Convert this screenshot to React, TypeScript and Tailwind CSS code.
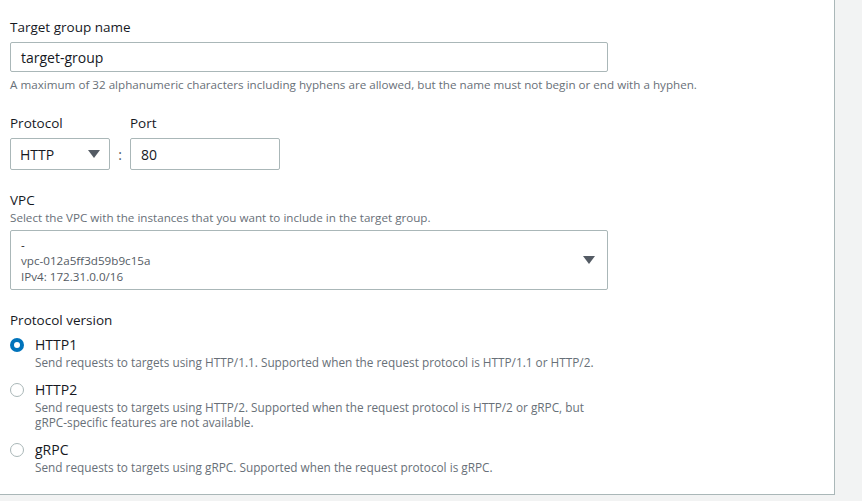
import React from "react";

const font = { fontFamily: '"Open Sans", "Noto Sans", sans-serif' };

function Caret() {
  return (
    <svg width="12" height="8" viewBox="0 0 12 8" className="shrink-0">
      <path d="M0 0 H12 L6 8 Z" fill="#545b64" />
    </svg>
  );
}

function Radio({ checked }: { checked?: boolean }) {
  return checked ? (
    <span className="mt-[3px] flex h-[14px] w-[14px] shrink-0 items-center justify-center rounded-full bg-[#0073bb]">
      <span className="h-[6px] w-[6px] rounded-full bg-white" />
    </span>
  ) : (
    <span className="mt-[3px] h-[14px] w-[14px] shrink-0 rounded-full border border-[#aab7b8] bg-white" />
  );
}

function Option({ checked, title, desc }: { checked?: boolean; title: string; desc: React.ReactNode }) {
  return (
    <div className="flex gap-[11px] pl-[10px]">
      <Radio checked={checked} />
      <div>
        <div className="text-[14px] leading-[20px] text-[#16191f]">{title}</div>
        <div className="text-[11.8px] leading-[15px] text-[#687078]">{desc}</div>
      </div>
    </div>
  );
}

export default function App() {
  return (
    <div className="h-[501px] w-[862px] overflow-hidden bg-[#f2f3f3]" style={font}>
      <div className="h-[495px] w-[835px] border-b border-r border-[#aab7b8] bg-white pl-[10px] pt-[17px]">
        <div className="text-[13.5px] leading-[20px] text-[#16191f]">Target group name</div>
        <div className="mt-[5px] flex h-[30px] w-[598px] items-center rounded-[2px] border border-[#aab7b8] px-[10px] text-[14px] text-[#16191f]">
          target-group
        </div>
        <div className="mt-[5px] text-[11.65px] leading-[16px] text-[#687078]">
          A maximum of 32 alphanumeric characters including hyphens are allowed, but the name must not begin or end with a hyphen.
        </div>

        <div className="mt-[20px] flex">
          <div className="w-[120px]">
            <div className="text-[13.5px] leading-[20px] text-[#16191f]">Protocol</div>
          </div>
          <div className="text-[13.5px] leading-[20px] text-[#16191f]">Port</div>
        </div>
        <div className="mt-[5px] flex items-center">
          <div className="flex h-[32px] w-[100px] items-center justify-between rounded-[2px] border border-[#aab7b8] pl-[9px] pr-[9px] text-[14px] text-[#16191f]">
            HTTP
            <Caret />
          </div>
          <div className="w-[20px] text-center text-[14px] text-[#545b64]">:</div>
          <div className="flex h-[32px] w-[150px] items-center rounded-[2px] border border-[#aab7b8] px-[10px] text-[14px] text-[#16191f]">
            80
          </div>
        </div>

        <div className="mt-[20px] text-[13.5px] leading-[20px] text-[#16191f]">VPC</div>
        <div className="text-[11.65px] leading-[16px] text-[#687078]">
          Select the VPC with the instances that you want to include in the target group.
        </div>
        <div className="mt-[4px] flex h-[60px] w-[598px] items-center justify-between rounded-[2px] border border-[#aab7b8] pl-[10px] pr-[12px]">
          <div className="pt-[2px] text-[11.65px] leading-[16px] text-[#545b64]">
            <div className="text-[#16191f]">-</div>
            <div>vpc-012a5ff3d59b9c15a</div>
            <div>IPv4: 172.31.0.0/16</div>
          </div>
          <Caret />
        </div>

        <div className="mt-[20px] text-[13.5px] leading-[20px] text-[#16191f]">Protocol version</div>
        <div className="-ml-[10px] mt-[5px] flex flex-col gap-[10px]">
          <Option
            checked
            title="HTTP1"
            desc="Send requests to targets using HTTP/1.1. Supported when the request protocol is HTTP/1.1 or HTTP/2."
          />
          <Option
            title="HTTP2"
            desc={
              <>
                Send requests to targets using HTTP/2. Supported when the request protocol is HTTP/2 or gRPC, but
                <br />
                gRPC-specific features are not available.
              </>
            }
          />
          <Option title="gRPC" desc="Send requests to targets using gRPC. Supported when the request protocol is gRPC." />
        </div>
      </div>
    </div>
  );
}
